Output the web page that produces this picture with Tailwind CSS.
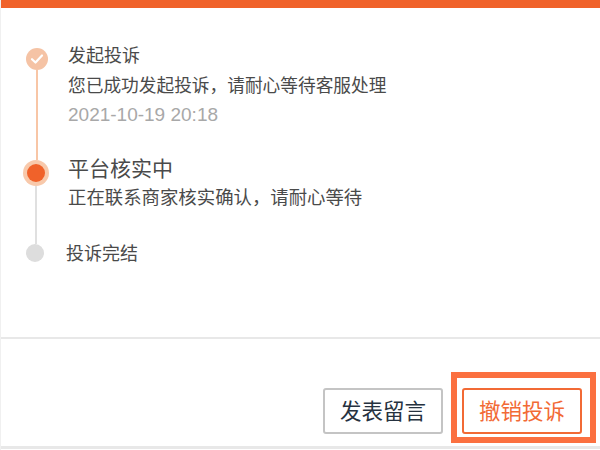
<!DOCTYPE html>
<html lang="zh">
<head>
  <meta charset="UTF-8" />
  <title>投诉进度</title>
  <script src="https://cdn.jsdelivr.net/npm/@tailwindcss/browser@4"></script>
</head>
<body class="bg-white overflow-hidden font-['Noto_Sans_CJK_SC','Liberation_Sans',sans-serif]">
<div class="relative w-[600px] h-[450px] flex flex-col border-l border-[#f0f0f0]">
  <!-- top bar -->
  <div class="h-[8px] shrink-0 bg-[#f0622a]"></div>

  <!-- timeline -->
  <div class="h-[331px] shrink-0 pt-[40px] pl-[23px] border-b-2 border-[#e8e8e8]">
    <div class="flex h-[112px]">
      <div class="w-[26px] flex flex-col items-center">
        <div class="w-[22px] h-[22px] shrink-0 rounded-full bg-[#f5c3a5] flex items-center justify-center">
          <svg width="14" height="12" viewBox="0 0 14 12" fill="none"><path d="M2 6.2 5.5 9.5 12 2.5" stroke="#fff" stroke-width="2.2" stroke-linecap="round" stroke-linejoin="round"/></svg>
        </div>
        <div class="w-[2px] flex-1 bg-[#f8c6a6]"></div>
      </div>
      <div class="ml-[18px]">
        <p class="text-[18px] leading-[24px] mt-[-6px] text-[#4a4a4a]">发起投诉</p>
        <p class="text-[17.7px] leading-[24px] mt-[6px] text-[#4a4a4a]">您已成功发起投诉，请耐心等待客服处理</p>
        <p class="text-[19px] leading-[24px] mt-[7px] text-[#a8a8a8] font-['Liberation_Sans',sans-serif]">2021-10-19 20:18</p>
      </div>
    </div>

    <div class="flex h-[84px]">
      <div class="w-[26px] flex flex-col items-center ml-[-1px]">
        <div class="w-[26px] h-[26px] shrink-0 rounded-full bg-[#f8c9ab] flex items-center justify-center">
          <div class="w-[18px] h-[18px] rounded-full bg-[#f0622a]"></div>
        </div>
        <div class="w-[2px] flex-1 bg-[#e0e0e0]"></div>
      </div>
      <div class="ml-[19px]">
        <p class="text-[21px] leading-[28px] mt-[-7px] text-[#4a4a4a]">平台核实中</p>
        <p class="text-[18.4px] leading-[24px] mt-[3px] text-[#4a4a4a]">正在联系商家核实确认，请耐心等待</p>
      </div>
    </div>

    <div class="flex h-[18px] items-center">
      <div class="w-[26px] flex justify-center ml-[-2px]">
        <div class="w-[18px] h-[18px] rounded-full bg-[#dddddd]"></div>
      </div>
      <p class="ml-[18px] mt-[-2px] text-[18px] leading-[24px] text-[#4a4a4a]">投诉完结</p>
    </div>
  </div>

  <!-- actions -->
  <div class="flex-1 flex justify-end gap-[19px] pt-[49px] pr-[18px]">
    <button class="w-[120px] h-[46px] rounded-[3px] border-2 border-[#c4c4c4] bg-white text-[21.5px] leading-[38px] pb-[2px] text-[#26323f]">发表留言</button>
    <button class="w-[120px] h-[46px] rounded-[3px] border-2 border-[#f26a35] bg-white text-[21.5px] leading-[38px] pb-[2px] text-[#f26a35]">撤销投诉</button>
  </div>
  <div class="h-[3px] shrink-0 bg-[#e8e8e8] mb-px"></div>

  <!-- highlight round the cancel button -->
  <div class="absolute left-[450px] top-[372px] w-[145px] h-[71px] border-[6px] border-[#fb7040]"></div>
</div>
</body>
</html>
